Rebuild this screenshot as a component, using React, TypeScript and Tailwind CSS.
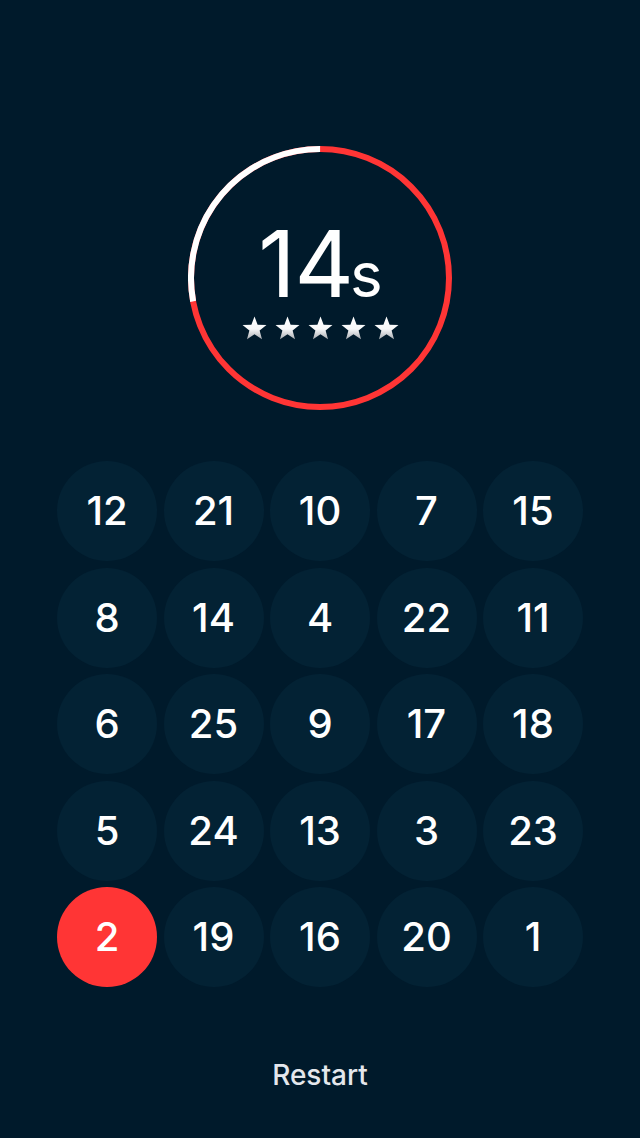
import { useState } from "react";

// Number-order puzzle: tap 1..25 in order before the ring runs out.
const GRID_NUMBERS = [
  12, 21, 10, 7, 15,
  8, 14, 4, 22, 11,
  6, 25, 9, 17, 18,
  5, 24, 13, 3, 23,
  2, 19, 16, 20, 1,
];

const RING_SIZE = 264;
const STROKE = 6;
const R = (RING_SIZE - STROKE) / 2;
const CIRC = 2 * Math.PI * R;

function Star({ id }: { id: string }) {
  return (
    <svg width="25" height="24" viewBox="0 0 24 23">
      <defs>
        <linearGradient id={id} x1="0" y1="0" x2="0" y2="1">
          <stop offset="0" stopColor="#ffffff" />
          <stop offset="0.55" stopColor="#f7f8f9" />
          <stop offset="1" stopColor="#a9adb2" />
        </linearGradient>
      </defs>
      <polygon
        points="12,0.5 15,8.3 23.5,8.6 16.9,13.9 19.2,22.3 12,17.5 4.8,22.3 7.1,13.9 0.5,8.6 9,8.3"
        fill={`url(#${id})`}
      />
    </svg>
  );
}

function TimerRing({ seconds, elapsed }: { seconds: number; elapsed: number }) {
  // white = time used, drawn counter-clockwise from 12 o'clock
  const whiteLen = elapsed * CIRC;
  const startDeg = 270 - elapsed * 360;
  return (
    <div className="relative w-[264px] h-[264px] shrink-0">
      <svg width={RING_SIZE} height={RING_SIZE} className="absolute inset-0">
        <circle
          cx={RING_SIZE / 2}
          cy={RING_SIZE / 2}
          r={R}
          fill="none"
          stroke="#ff3535"
          strokeWidth={STROKE}
        />
        <circle
          cx={RING_SIZE / 2}
          cy={RING_SIZE / 2}
          r={R}
          fill="none"
          stroke="#ffffff"
          strokeWidth={STROKE}
          strokeDasharray={`${whiteLen} ${CIRC}`}
          transform={`rotate(${startDeg} ${RING_SIZE / 2} ${RING_SIZE / 2})`}
        />
      </svg>
      <div className="relative flex h-full flex-col items-center pt-[72px]">
        <div className="flex items-baseline text-white leading-none tracking-[-1px]">
          <span className="text-[92px] font-normal">{seconds}</span>
          <span className="text-[62px] font-normal -ml-[3px]">s</span>
        </div>
        <div className="mt-[6px] flex gap-[8px]">
          {[0, 1, 2, 3, 4].map((i) => (
            <Star key={i} id={`star-grad-${i}`} />
          ))}
        </div>
      </div>
    </div>
  );
}

export default function App() {
  const [next] = useState(3);
  const done = new Set([2]);

  return (
    <div
      className="flex min-h-[1138px] w-full flex-col items-center bg-[#001a2b] pt-[146px]"
      style={{ fontFamily: "Inter, 'Noto Sans', sans-serif" }}
    >
      <TimerRing seconds={14} elapsed={0.279} />

      <div className="mt-[51px] grid w-[526px] grid-cols-5 gap-[6.5px]">
        {GRID_NUMBERS.map((n) => (
          <button
            key={n}
            type="button"
            data-next={n === next}
            className={
              done.has(n)
                ? "flex h-[100px] w-[100px] items-center justify-center rounded-full bg-[#ff3535] text-[40px] font-medium text-white"
                : "flex h-[100px] w-[100px] items-center justify-center rounded-full bg-[#032234] text-[40px] font-medium text-white"
            }
          >
            {n}
          </button>
        ))}
      </div>

      <button
        type="button"
        className="mt-[70px] text-[28px] font-medium leading-[36px] text-[#e4e7ec]"
      >
        Restart
      </button>
    </div>
  );
}
